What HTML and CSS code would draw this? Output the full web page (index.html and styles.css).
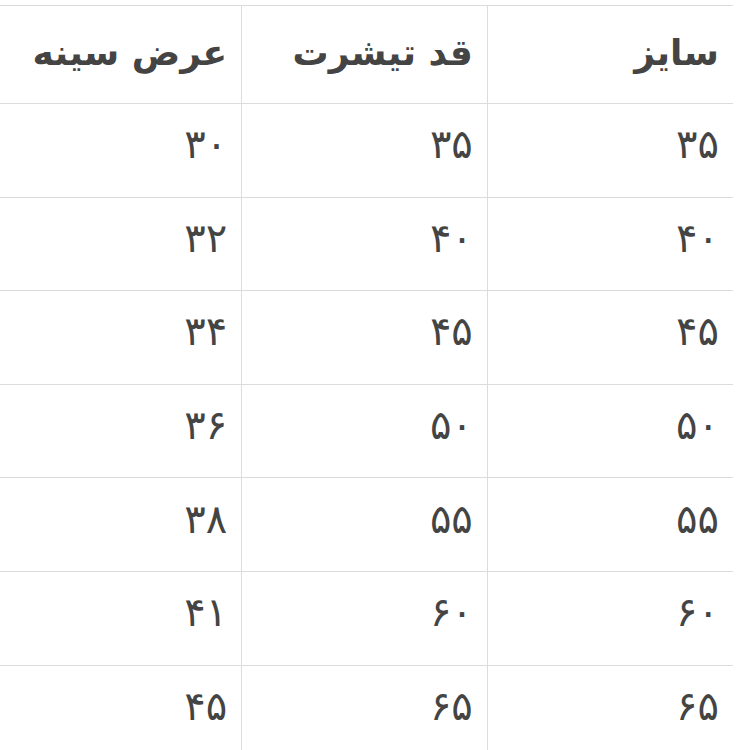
FILE: index.html
```html
<!DOCTYPE html>
<html lang="fa" dir="rtl">
<head>
<meta charset="utf-8">
<link rel="stylesheet" href="styles.css">
</head>
<body>
<div class="wrap">
<table class="sizes">
<thead>
<tr><th>سایز</th><th>قد تیشرت</th><th>عرض سینه</th></tr>
</thead>
<tbody>
<tr><td>۳۵</td><td>۳۵</td><td>۳۰</td></tr>
<tr><td>۴۰</td><td>۴۰</td><td>۳۲</td></tr>
<tr><td>۴۵</td><td>۴۵</td><td>۳۴</td></tr>
<tr><td>۵۰</td><td>۵۰</td><td>۳۶</td></tr>
<tr><td>۵۵</td><td>۵۵</td><td>۳۸</td></tr>
<tr><td>۶۰</td><td>۶۰</td><td>۴۱</td></tr>
<tr><td>۶۵</td><td>۶۵</td><td>۴۵</td></tr>
</tbody>
</table>
</div>
</body>
</html>
```

FILE: styles.css
```css
html, body {
  margin: 0;
  padding: 0;
  background: #ffffff;
}
body {
  font-family: "DejaVu Sans", sans-serif;
  color: #444444;
  overflow: hidden;
}
.wrap {
  padding-top: 5px;
  padding-right: 17px;
  margin-left: -4px;
}
.sizes {
  width: 737px;
  border-collapse: collapse;
  table-layout: fixed;
}
.sizes th, .sizes td {
  text-align: right;
  padding: 0 14px 0 0;
  border-top: 1px solid #dcdcdc;
  border-bottom: 1px solid #dcdcdc;
  border-left: 1px solid #dcdcdc;
  line-height: 1;
}
.sizes th:last-child, .sizes td:last-child {
  border-left: none;
}
.sizes th {
  height: 93px;
  font-size: 36px;
  font-weight: bold;
  padding-bottom: 4px;
}
.sizes td {
  height: 80.6px;
  font-size: 40px;
  font-weight: normal;
  padding-bottom: 12px;
}
```
